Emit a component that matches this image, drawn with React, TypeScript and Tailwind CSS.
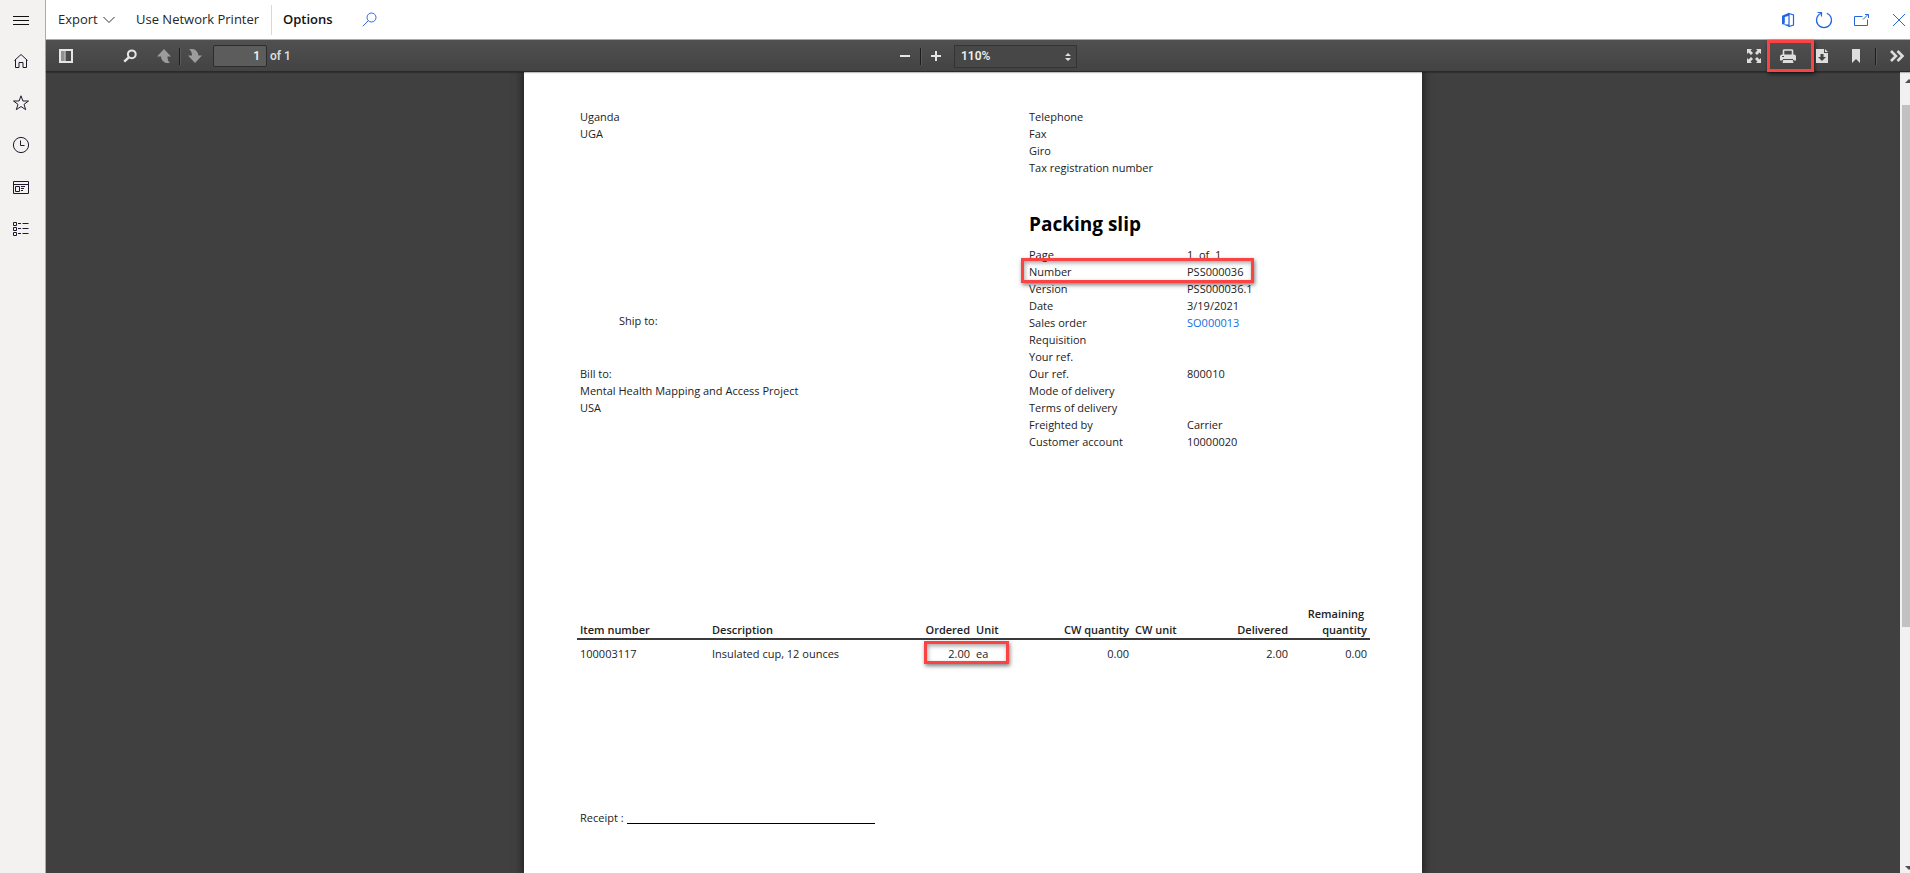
import type { ReactNode } from 'react';

const details: { label: string; value?: string; link?: boolean; marked?: boolean }[] = [
  { label: 'Page', value: '1\u00a0 of\u00a0 1' },
  { label: 'Number', value: 'PSS000036', marked: true },
  { label: 'Version', value: 'PSS000036.1' },
  { label: 'Date', value: '3/19/2021' },
  { label: 'Sales order', value: 'SO000013', link: true },
  { label: 'Requisition' },
  { label: 'Your ref.' },
  { label: 'Our ref.', value: '800010' },
  { label: 'Mode of delivery' },
  { label: 'Terms of delivery' },
  { label: 'Freighted by', value: 'Carrier' },
  { label: 'Customer account', value: '10000020' },
];

function NavButton({ label, children }: { label: string; children: ReactNode }) {
  return (
    <button type="button" aria-label={label} className="flex h-[42px] w-full items-center justify-center pr-[3px]">
      <svg width="18" height="18" viewBox="0 0 18 18" fill="none" stroke="#1b1a2e" strokeWidth="1">
        {children}
      </svg>
    </button>
  );
}

function SideNav() {
  return (
    <nav aria-label="Main" className="flex w-[46px] shrink-0 flex-col border-r border-[#ababab] bg-[#f3f2f1]">
      <button type="button" aria-label="Expand navigation" className="flex h-10 items-center justify-center pr-[3px] pt-px">
        <svg width="18" height="18" viewBox="0 0 18 18" fill="none" stroke="#111" strokeWidth="1">
          <path d="M1 4.500h16M1 8.500h16M1 12.500h16" />
        </svg>
      </button>
      <NavButton label="Home">
        <path d="M2.500 8.500 9 2.500l6.500 6M3.500 7.800V15.500h3.500v-5h4v5h3.500V7.800" />
      </NavButton>
      <NavButton label="Favorites">
        <path d="M9 1.800l1.900 5.200h5.600l-4.500 3.400 1.700 5.300L9 12.500l-4.700 3.200L6 10.400 1.500 7h5.600z" />
      </NavButton>
      <NavButton label="Recent">
        <circle cx="9" cy="9" r="7.600" />
        <path d="M8.500 4.500v5h4" />
      </NavButton>
      <NavButton label="Workspaces">
        <path d="M1.500 3.500h15v12h-15zM1.500 6.500h15M3.500 8.500h4v5h-4zM9 8.500h4M9 10.500h3M9 12.500h2" />
      </NavButton>
      <NavButton label="Modules">
        <path d="M1.500 2.500h3v3h-3zM1.500 7.500h3v3h-3zM1.500 12.500h3v3h-3zM6 3.500h3M10.500 3.500h6M6 8.500h3M10.500 8.500h6M6 13.500h3M10.500 13.500h6" />
      </NavButton>
    </nav>
  );
}

function ActionBar() {
  return (
    <header className="flex h-10 items-center border-b border-[#ababab] bg-white pl-3 text-[13px] text-[#262626]">
      <button type="button" className="flex w-[78px] items-center gap-[5px]">
        Export
        <svg width="12" height="8" viewBox="0 0 12 8" fill="none" stroke="#333" strokeWidth="1">
          <path d="M.5 1 6 6.500 11.500 1" />
        </svg>
      </button>
      <button type="button" className="w-[135px] whitespace-nowrap text-left">Use Network Printer</button>
      <span className="h-[30px] w-px bg-[#d8d8d8]" />
      <button type="button" className="w-[90px] pl-[11px] text-left font-semibold text-[#111]">Options</button>
      <button type="button" aria-label="Search">
        <svg width="15" height="15" viewBox="0 0 15 15" fill="none" stroke="#3565e0" strokeWidth="1">
          <circle cx="9.500" cy="5.500" r="4.500" />
          <path d="M6.300 8.700.7 14.300" />
        </svg>
      </button>
      <div className="ml-auto flex items-center pr-1">
        <button type="button" aria-label="Open in Microsoft Office" className="mr-5">
          <svg width="14" height="16" viewBox="0 0 14 16" fill="none" stroke="#2266e3">
            <path d="M8 1.500 12.500 3v10L8 14.500z" strokeWidth="1.200" />
            <path d="M8 .8 1 3.800v8.700l2.800-1V5L8 3.700z" fill="#2266e3" stroke="none" />
            <path d="M1.500 12.300 8 14.800V12.500z" fill="#2266e3" stroke="none" />
          </svg>
        </button>
        <button type="button" aria-label="Refresh" className="mr-5">
          <svg width="18" height="18" viewBox="0 0 18 18" fill="none" stroke="#2266e3" strokeWidth="1.200">
            <path d="M6.200 2.200A7.500 7.500 0 1 0 11.800 2.200M2.500 1.500h4v4" />
          </svg>
        </button>
        <button type="button" aria-label="Open in new window" className="mr-[22px]">
          <svg width="17" height="14" viewBox="0 0 17 14" fill="none" stroke="#2266e3" strokeWidth="1">
            <path d="M9.500 3.500h-8v9h13V6.500M10 6.500l5-5M12 1.500h3.500v3.500" />
          </svg>
        </button>
        <button type="button" aria-label="Close">
          <svg width="14" height="14" viewBox="0 0 14 14" fill="none" stroke="#2266e3" strokeWidth="1">
            <path d="M1 1l12 12M13 1 1 13" />
          </svg>
        </button>
      </div>
    </header>
  );
}

function Separator() {
  return <span className="h-[17px] w-[2px] shrink-0 border-l border-[#1c1c1c] bg-[#5a5a5a]" />;
}

function ViewerToolbar() {
  return (
    <div
      role="toolbar"
      aria-label="Document viewer"
      className="relative z-10 grid h-8 grid-cols-[1fr_auto_1fr] items-center border-b border-[#2a2a2a] bg-linear-to-b from-[#505050] to-[#434343] font-[Roboto,sans-serif] text-[12px] font-semibold text-[#dadada] shadow-[0_1px_1px_rgba(0,0,0,0.25)]"
    >
      <div className="flex items-center pl-[13px]">
        <button type="button" aria-label="Toggle sidebar" className="mr-[50px]">
          <svg width="14" height="14" viewBox="0 0 14 14">
            <path d="M1 1h12v12H1z" fill="none" stroke="#e6e6e6" strokeWidth="2" />
            <path d="M2 2h3.500v10H2z" fill="#909090" />
            <path d="M6 2v10" stroke="#e6e6e6" strokeWidth="1" />
          </svg>
        </button>
        <button type="button" aria-label="Find" className="mr-5">
          <svg width="14" height="14" viewBox="0 0 14 14" fill="none" stroke="#e6e6e6">
            <circle cx="8.800" cy="5.300" r="3.900" strokeWidth="2" />
            <path d="M5.800 8.300 1.200 12.700" strokeWidth="2.400" />
          </svg>
        </button>
        <button type="button" aria-label="Previous page" className="mr-2">
          <svg width="14" height="14" viewBox="0 0 14 14" fill="#9c9c9c">
            <path d="M7 0l7 7.500h-3.500c0 3 .5 5 2.500 6.500H9C6 13 4.200 10.500 4 7.500H0z" />
          </svg>
        </button>
        <Separator />
        <button type="button" aria-label="Next page" className="ml-[7px] mr-[11px]">
          <svg width="14" height="14" viewBox="0 0 14 14" fill="#9c9c9c">
            <path d="M7 14l7-7.500h-3.500C10 3 8 .5 5 0H1c2 1.500 3 3.500 3 6.500H0z" />
          </svg>
        </button>
        <input
          aria-label="Page number"
          defaultValue="1"
          className="mr-[3px] h-[22px] w-[54px] rounded-[2px] border border-[#2c2c2c] bg-[#5c5c5c] pr-[6px] text-right text-[#eee]"
        />
        <span>of 1</span>
      </div>
      <div className="flex items-center pl-5">
        <button type="button" aria-label="Zoom out" className="mr-[9px]">
          <svg width="12" height="12" viewBox="0 0 12 12"><path d="M1 5h10v2H1z" fill="#e6e6e6" /></svg>
        </button>
        <Separator />
        <button type="button" aria-label="Zoom in" className="ml-2 mr-3">
          <svg width="12" height="12" viewBox="0 0 12 12"><path d="M1 5h4V1h2v4h4v2H7v4H5V7H1z" fill="#e6e6e6" /></svg>
        </button>
        <span className="relative">
          <select
            aria-label="Zoom level"
            defaultValue="110%"
            className="h-[23px] w-[123px] appearance-none border border-[#333] bg-[#474747] pl-[6px] text-[#eee]"
          >
            <option>110%</option>
          </select>
          <svg className="pointer-events-none absolute right-[6px] top-[8px]" width="6" height="8" viewBox="0 0 6 8" fill="#e0e0e0">
            <path d="M3 0l3 3H0zM3 8l3-3H0z" />
          </svg>
        </span>
      </div>
      <div className="flex items-center justify-end pr-[5px]">
        <button type="button" aria-label="Presentation mode" className="mr-[6px]">
          <svg width="14" height="14" viewBox="0 0 14 14">
            <path d="M0 0h5L3.500 1.500l2.500 2.500-2 2L1.500 3.500 0 5zM14 0v5l-1.500-1.500L10 6 8 4l2.500-2.500L9 0zM0 14V9l1.500 1.500L4 8l2 2-2.500 2.500L5 14zM14 14H9l1.500-1.500L8 10l2-2 2.500 2.500L14 9z" fill="#dedede" />
          </svg>
        </button>
        <button
          type="button"
          aria-label="Print"
          className="mr-[2px] flex h-8 w-[47px] items-center border-[3px] border-[#fb4343] pl-[10px] shadow-[1px_2px_4px_rgba(0,0,0,0.6)]"
        >
          <svg width="16" height="14" viewBox="0 0 16 14">
            <path d="M3.500 6V1.500Q3.500 1 4.500 1h7q1 0 1 .5V6" fill="none" stroke="#dedede" strokeWidth="1.600" />
            <path d="M2 5.500h12q2 0 2 2v4h-2l-1.500-1.500h-9L2 11.500H0v-4q0-2 2-2z" fill="#dedede" />
            <path d="M3.500 10h9l1 4h-11z" fill="#dedede" />
            <path d="M3 10.500h10" stroke="#4a4a4a" strokeWidth="1" />
            <path d="M2 7.500h2" stroke="#4a4a4a" strokeWidth="1" />
          </svg>
        </button>
        <button type="button" aria-label="Download" className="mr-6">
          <svg width="12" height="14" viewBox="0 0 12 14">
            <path d="M0 0h8v4h4v10H0zM9 0l3 3H9z" fill="#dedede" />
            <path d="M4.500 5h3v3H10l-4 4-4-4h2.500z" fill="#454545" />
          </svg>
        </button>
        <button type="button" aria-label="Bookmark" className="mr-[15px]">
          <svg width="8" height="14" viewBox="0 0 8 14"><path d="M0 0h8v14L4 10l-4 4z" fill="#dedede" /></svg>
        </button>
        <Separator />
        <button type="button" aria-label="Tools" className="ml-[13px]">
          <svg width="15" height="12" viewBox="0 0 15 12" fill="none" stroke="#dedede" strokeWidth="2.600">
            <path d="M1 1l5 5-5 5M7.500 1l5 5-5 5" />
          </svg>
        </button>
      </div>
    </div>
  );
}

function Scrollbar() {
  return (
    <div className="flex w-[10px] shrink-0 flex-col items-end overflow-hidden bg-[#f1f1f1]">
      <svg width="10" height="33" viewBox="0 0 10 33" className="shrink-0"><path d="M5 11l4-4 4 4z" fill="#505050" /></svg>
      <span className="h-[522px] w-2 bg-[#c1c1c1]" />
      <svg width="10" height="17" viewBox="0 0 10 17" className="mt-auto shrink-0"><path d="M5 10l4 4 4-4z" fill="#505050" /></svg>
    </div>
  );
}

function ItemsTable() {
  return (
    <table className="mx-[53px] mt-[156px] w-[793px] table-fixed border-collapse text-left text-[11px]">
      <colgroup>
        <col className="w-[132px]" />
        <col className="w-[184px]" />
        <col className="w-[80px]" />
        <col className="w-[67px]" />
        <col className="w-[92px]" />
        <col className="w-[78px]" />
        <col className="w-[81px]" />
        <col className="w-[79px]" />
      </colgroup>
      <thead>
        <tr className="border-b-2 border-[#3a3a3a] align-bottom leading-4 [&>th]:whitespace-nowrap [&>th]:px-[3px] [&>th]:font-semibold">
          <th>Item number</th>
          <th>Description</th>
          <th className="text-right">Ordered</th>
          <th>Unit</th>
          <th className="text-right">CW quantity</th>
          <th>CW unit</th>
          <th className="text-right">Delivered</th>
          <th className="text-right">Remaining&nbsp;<br />quantity</th>
        </tr>
      </thead>
      <tbody>
        <tr className="leading-[17px] [&>td]:px-[3px] [&>td]:pt-[5px]">
          <td>100003117</td>
          <td>Insulated cup, 12 ounces</td>
          <td className="relative text-right">
            2.00
            <span className="absolute left-[31px] top-px h-[23px] w-[85px] border-[3px] border-[#fb4343] shadow-[1px_2px_4px_rgba(0,0,0,0.5),inset_1px_2px_4px_rgba(0,0,0,0.35)]" />
          </td>
          <td>ea</td>
          <td className="text-right">0.00</td>
          <td />
          <td className="text-right">2.00</td>
          <td className="text-right">0.00</td>
        </tr>
      </tbody>
    </table>
  );
}

function PackingSlip() {
  return (
    <article className="w-[898px] shrink-0 bg-white pt-9 text-[11px] leading-[17px] text-[#222] shadow-[0_0_8px_2px_rgba(0,0,0,0.5)]">
      <div className="grid grid-cols-[449px_1fr] pl-14">
        <div>
          <p>Uganda</p>
          <p>UGA</p>
          <p className="mt-[170px] pl-[39px]">Ship to:</p>
          <p className="mt-9">Bill to:</p>
          <p>Mental Health Mapping and Access Project</p>
          <p>USA</p>
        </div>
        <div>
          <p>Telephone</p>
          <p>Fax</p>
          <p>Giro</p>
          <p>Tax registration number</p>
          <h1 className="mb-2 mt-[34px] text-[19px] font-bold leading-7 text-black">Packing slip</h1>
          <dl>
            {details.map((d) => (
              <div key={d.label} className="relative grid h-[17px] grid-cols-[158px_1fr]">
                <dt>{d.label}</dt>
                <dd className="whitespace-nowrap">{d.link ? <a href="#sales-order" className="text-[#0f6fdc]">{d.value}</a> : d.value}</dd>
                {d.marked && (
                  <span className="absolute -left-2 -top-[5px] z-10 h-[25px] w-[233px] border-[3px] border-[#fb4343] shadow-[1px_2px_4px_rgba(0,0,0,0.5),inset_1px_2px_4px_rgba(0,0,0,0.35)]" />
                )}
              </div>
            ))}
          </dl>
        </div>
      </div>
      <ItemsTable />
      <p className="ml-14 mt-[147px] flex items-end gap-[3px]">
        Receipt :
        <span className="mb-[2px] w-[248px] border-b border-black" />
      </p>
    </article>
  );
}

export default function App() {
  return (
    <div className="flex h-screen overflow-hidden font-['Open_Sans','Noto_Sans',sans-serif]">
      <SideNav />
      <div className="flex min-w-0 flex-1 flex-col">
        <ActionBar />
        <ViewerToolbar />
        <div className="flex min-h-0 flex-1 bg-[#404040]">
          <main className="flex min-w-0 flex-1 justify-center overflow-hidden">
            <PackingSlip />
          </main>
          <Scrollbar />
        </div>
      </div>
    </div>
  );
}
